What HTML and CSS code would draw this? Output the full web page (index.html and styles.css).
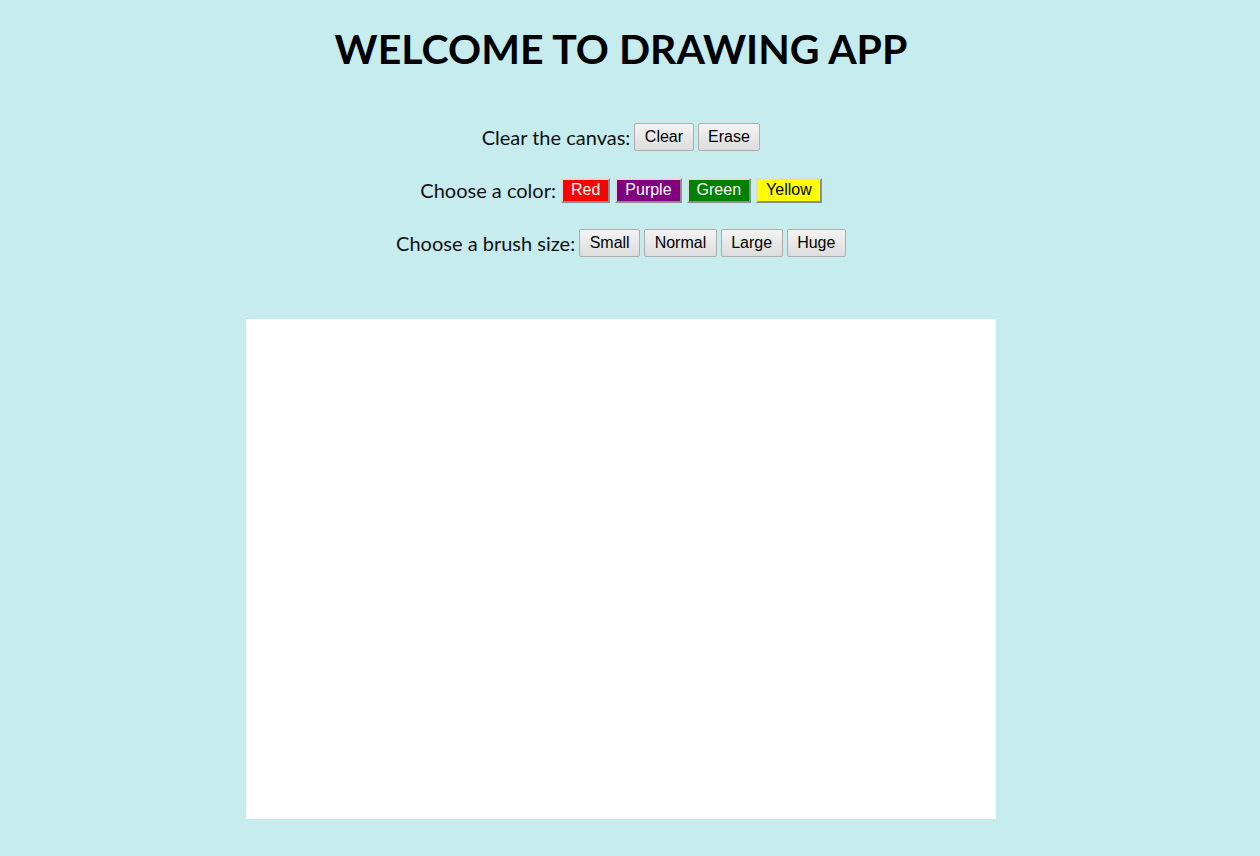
FILE: index.html
```html
<!DOCTYPE html>
<html>
<head>
<meta charset="utf-8">
<link rel="stylesheet" href="styles.css">
</head>
<body>
<div class="page">
  <h1 class="title">WELCOME TO DRAWING APP</h1>
  <div class="row row-clear">
    <span class="label">Clear the canvas:</span>
    <button class="btn">Clear</button>
    <button class="btn">Erase</button>
  </div>
  <div class="row row-color">
    <span class="label">Choose a color:</span>
    <button class="cbtn red">Red</button>
    <button class="cbtn purple">Purple</button>
    <button class="cbtn green">Green</button>
    <button class="cbtn yellow">Yellow</button>
  </div>
  <div class="row row-size">
    <span class="label">Choose a brush size:</span>
    <button class="btn">Small</button>
    <button class="btn">Normal</button>
    <button class="btn">Large</button>
    <button class="btn">Huge</button>
  </div>
  <div class="canvas"></div>
</div>
</body>
</html>
```

FILE: styles.css
```css
html, body {
  margin: 0;
  padding: 0;
  background: #c6ecee;
}
.page {
  width: 1242px;
  display: flex;
  flex-direction: column;
  align-items: center;
  font-family: Lato, "Liberation Sans", sans-serif;
  color: #111;
}
.title {
  margin: 26px 0 0;
  font-size: 41px;
  font-weight: 700;
  line-height: 46px;
  color: #000;
}
.row {
  display: flex;
  align-items: center;
  gap: 4px;
}
.row-clear { margin-top: 51px; height: 28px; }
.row-color { margin-top: 26px; height: 26px; gap: 5px; }
.row-size { margin-top: 26px; height: 28px; }
.label {
  font-size: 20px;
}
.btn {
  font-family: "Liberation Sans", Arial, sans-serif;
  font-size: 16px;
  height: 28px;
  padding: 0 9.5px;
  border: 1px solid #adadad;
  border-radius: 2px;
  background: linear-gradient(#f3f3f3, #dddddd);
  color: #000;
}
.cbtn {
  font-family: "Liberation Sans", Arial, sans-serif;
  font-size: 16px;
  height: 25px;
  padding: 0 8px;
  border: 2px solid;
  border-color: #dcdcdc #8c8c8c #8c8c8c #dcdcdc;
}
.red { background: #ff0000; color: #fff; }
.purple { background: #800080; color: #fff; }
.green { background: #008000; color: #fff; }
.yellow { background: #ffff00; color: #000; }
.canvas {
  margin-top: 62px;
  width: 750px;
  height: 500px;
  background: #fff;
}
```
